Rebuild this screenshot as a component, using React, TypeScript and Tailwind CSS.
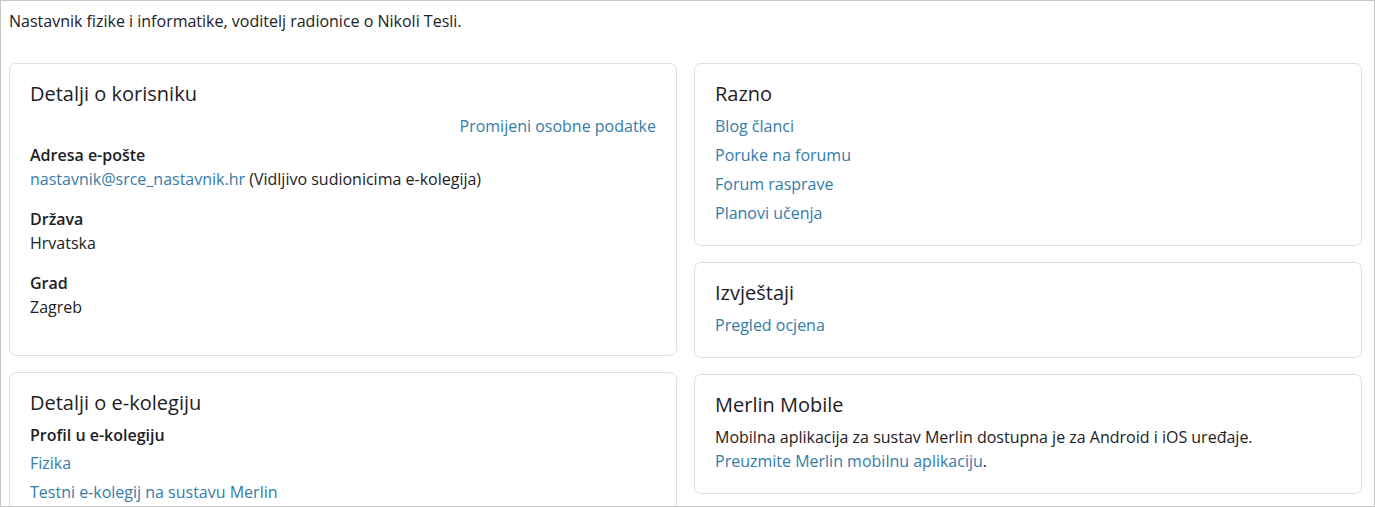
import type { ReactNode } from 'react';

const link = 'text-[#357ca8] hover:underline';

function Card({ title, children }: { title: string; children: ReactNode }) {
  return (
    <section className="rounded-[7px] border border-[#dedede] bg-white px-5 pt-[18px] pb-5">
      <h3 className="mb-2 text-[20px] leading-[24px] font-normal text-[#1d2125]">{title}</h3>
      {children}
    </section>
  );
}

function Field({ label, children }: { label: string; children: ReactNode }) {
  return (
    <dl className="mb-4">
      <dt className="font-semibold">{label}</dt>
      <dd>{children}</dd>
    </dl>
  );
}

function LinkList({ items }: { items: string[] }) {
  return (
    <ul className="flex flex-col gap-[5px]">
      {items.map((item) => (
        <li key={item}>
          <a href="#" className={link}>
            {item}
          </a>
        </li>
      ))}
    </ul>
  );
}

export default function App() {
  return (
    <div
      className="h-[507px] w-[1375px] overflow-hidden border border-[#c6c6c6] bg-white pl-2 pr-3 text-[16px] leading-[24px] text-[#1d2125]"
      style={{ fontFamily: '"Open Sans", "Noto Sans", sans-serif' }}
    >
      <p className="mt-2">Nastavnik fizike i informatike, voditelj radionice o Nikoli Tesli.</p>

      <div className="mt-[30px] grid grid-cols-2 items-start gap-x-[17px]">
        {/* lijevi stupac */}
        <div className="flex flex-col gap-4">
          <Card title="Detalji o korisniku">
            <div className="mb-[5px] text-right">
              <a href="#" className={link}>
                Promijeni osobne podatke
              </a>
            </div>
            <Field label="Adresa e-pošte">
              <a href="#" className={link}>
                nastavnik@srce_nastavnik.hr
              </a>{' '}
              (Vidljivo sudionicima e-kolegija)
            </Field>
            <Field label="Država">Hrvatska</Field>
            <Field label="Grad">Zagreb</Field>
          </Card>

          <Card title="Detalji o e-kolegiju">
            <dl>
              <dt className="font-semibold">Profil u e-kolegiju</dt>
              <dd className="mt-1">
                <LinkList items={['Fizika', 'Testni e-kolegij na sustavu Merlin']} />
              </dd>
            </dl>
          </Card>
        </div>

        {/* desni stupac */}
        <div className="flex flex-col gap-4">
          <Card title="Razno">
            <LinkList items={['Blog članci', 'Poruke na forumu', 'Forum rasprave', 'Planovi učenja']} />
          </Card>

          <Card title="Izvještaji">
            <LinkList items={['Pregled ocjena']} />
          </Card>

          <Card title="Merlin Mobile">
            <p>Mobilna aplikacija za sustav Merlin dostupna je za Android i iOS uređaje.</p>
            <p>
              <a href="#" className={link}>
                Preuzmite Merlin mobilnu aplikaciju
              </a>
              .
            </p>
          </Card>
        </div>
      </div>
    </div>
  );
}
